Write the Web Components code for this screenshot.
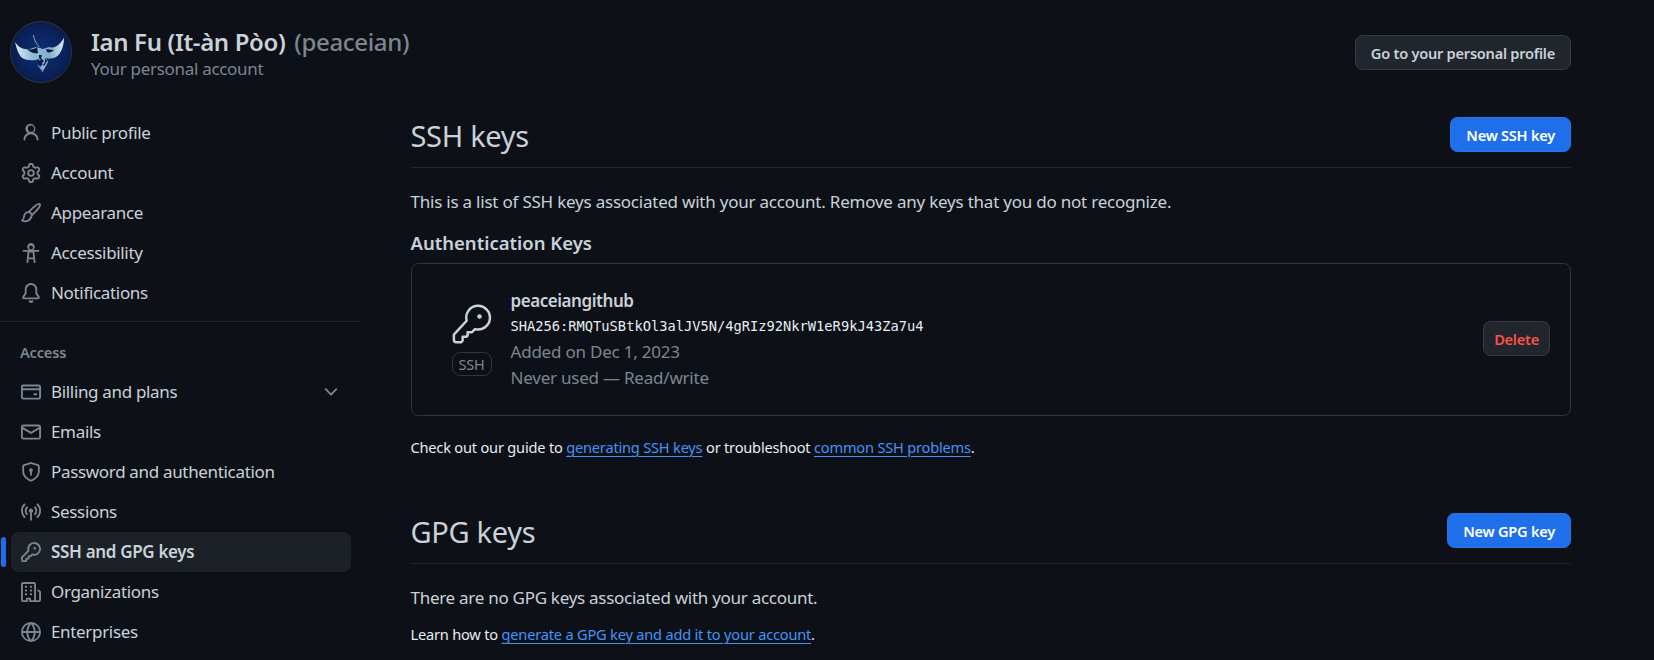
<!DOCTYPE html>
<html lang="en">
<head>
<meta charset="utf-8">
<title>SSH and GPG keys</title>
<style>
  html, body { margin: 0; height: 660px; overflow: hidden; background: #0d1117; }
  body { font-family: "Noto Sans", "Liberation Sans", sans-serif; color: #c9d1d9; font-size: 17px; letter-spacing: -0.3px; }
</style>
</head>
<body>
<settings-page></settings-page>

<script>
// octicons, 16px grid
const ICONS = {
    person: 'M10.561 8.073a6.005 6.005 0 0 1 3.432 5.142.75.75 0 1 1-1.498.07 4.5 4.5 0 0 0-8.99 0 .75.75 0 0 1-1.498-.07 6.004 6.004 0 0 1 3.431-5.142 3.999 3.999 0 1 1 4.123 0ZM10.5 4.5a2.5 2.5 0 1 0-5 0 2.5 2.5 0 0 0 5 0Z',
    gear: 'M8 0a8.2 8.2 0 0 1 .701.031C9.444.095 9.99.645 10.16 1.29l.288 1.107c.018.066.079.158.212.224.231.114.454.243.668.386.123.082.233.09.299.071l1.103-.303c.644-.176 1.392.021 1.82.63.27.385.506.792.704 1.218.315.675.111 1.422-.364 1.891l-.814.806c-.049.048-.098.147-.088.294.016.257.016.515 0 .772-.01.147.038.246.088.294l.814.806c.475.469.679 1.216.364 1.891a7.977 7.977 0 0 1-.704 1.217c-.428.61-1.176.807-1.82.63l-1.102-.302c-.067-.019-.177-.011-.3.071a5.909 5.909 0 0 1-.668.386c-.133.066-.194.158-.211.224l-.29 1.106c-.168.646-.715 1.196-1.458 1.26a8.006 8.006 0 0 1-1.402 0c-.743-.064-1.289-.614-1.458-1.26l-.289-1.106c-.018-.066-.079-.158-.212-.224a5.738 5.738 0 0 1-.668-.386c-.123-.082-.233-.09-.299-.071l-1.103.303c-.644.176-1.392-.021-1.82-.63a8.12 8.12 0 0 1-.704-1.218c-.315-.675-.111-1.422.363-1.891l.815-.806c.05-.048.098-.147.088-.294a6.214 6.214 0 0 1 0-.772c.01-.147-.038-.246-.088-.294l-.815-.806C.635 6.045.431 5.298.746 4.623a7.92 7.92 0 0 1 .704-1.217c.428-.61 1.176-.807 1.82-.63l1.102.302c.067.019.177.011.3-.071.214-.143.437-.272.668-.386.133-.066.194-.158.211-.224l.29-1.106C6.009.645 6.556.095 7.299.03 7.53.01 7.764 0 8 0Zm-.571 1.525c-.036.003-.108.036-.137.146l-.289 1.105c-.147.561-.549.967-.998 1.189-.173.086-.34.183-.5.29-.417.278-.97.423-1.529.27l-1.103-.303c-.109-.03-.175.016-.195.045-.22.312-.412.644-.573.99-.014.031-.021.11.059.19l.815.806c.411.406.562.957.53 1.456a4.709 4.709 0 0 0 0 .582c.032.499-.119 1.05-.53 1.456l-.815.806c-.081.08-.073.159-.059.19.162.346.353.677.573.989.02.03.085.076.195.046l1.102-.303c.56-.153 1.113-.008 1.53.27.161.107.328.204.501.29.447.222.85.629.997 1.189l.289 1.105c.029.109.101.143.137.146a6.6 6.6 0 0 0 1.142 0c.036-.003.108-.036.137-.146l.289-1.105c.147-.561.549-.967.998-1.189.173-.086.34-.183.5-.29.417-.278.97-.423 1.529-.27l1.103.303c.109.029.175-.016.195-.045.22-.313.411-.644.573-.99.014-.031.021-.11-.059-.19l-.815-.806c-.411-.406-.562-.957-.53-1.456a4.709 4.709 0 0 0 0-.582c-.032-.499.119-1.05.53-1.456l.815-.806c.081-.08.073-.159.059-.19a6.464 6.464 0 0 0-.573-.989c-.02-.03-.085-.076-.195-.046l-1.102.303c-.56.153-1.113.008-1.53-.27a4.44 4.44 0 0 0-.501-.29c-.447-.222-.85-.629-.997-1.189l-.289-1.105c-.029-.11-.101-.143-.137-.146a6.6 6.6 0 0 0-1.142 0ZM11 8a3 3 0 1 1-6 0 3 3 0 0 1 6 0ZM9.5 8a1.5 1.5 0 1 0-3.001.001A1.5 1.5 0 0 0 9.5 8Z',
    accessibility: 'M9.923 5.302c.063.063.122.129.178.198H14A.75.75 0 0 1 14 7h-3.3l.578 5.163.362 2.997a.75.75 0 0 1-1.49.18L9.868 13H6.132l-.282 2.34a.75.75 0 0 1-1.49-.18l.362-2.997L5.3 7H2a.75.75 0 0 1 0-1.5h3.9a2.54 2.54 0 0 1 .176-.198 3 3 0 1 1 3.847 0ZM9.2 7.5H6.8l-.5 4h3.4ZM8 5a1.5 1.5 0 1 0 .001-3.001A1.5 1.5 0 0 0 8 5Z',
    bell: 'M8 16a2 2 0 0 0 1.985-1.75c.017-.137-.097-.25-.235-.25h-3.5c-.138 0-.252.113-.235.25A2 2 0 0 0 8 16ZM3 5a5 5 0 0 1 10 0v2.947c0 .05.015.098.042.139l1.703 2.555A1.519 1.519 0 0 1 13.482 13H2.518a1.516 1.516 0 0 1-1.263-2.36l1.703-2.554A.255.255 0 0 0 3 7.947Zm5-3.5A3.5 3.5 0 0 0 4.5 5v2.947c0 .346-.102.683-.294.97l-1.703 2.556a.017.017 0 0 0-.003.01l.001.006c0 .002.002.004.004.006l.006.004.007.001h10.964l.007-.001.006-.004.004-.006.001-.007a.017.017 0 0 0-.003-.01l-1.703-2.554a1.745 1.745 0 0 1-.294-.97V5A3.5 3.5 0 0 0 8 1.5Z',
    card: 'M10.75 9a.75.75 0 0 0 0 1.5h1.5a.75.75 0 0 0 0-1.5h-1.5Z M0 3.75C0 2.784.784 2 1.75 2h12.5c.966 0 1.75.784 1.75 1.75v8.5A1.75 1.75 0 0 1 14.25 14H1.75A1.75 1.75 0 0 1 0 12.25ZM14.5 6.5h-13v5.75c0 .138.112.25.25.25h12.5a.25.25 0 0 0 .25-.25Zm0-2.75a.25.25 0 0 0-.25-.25H1.75a.25.25 0 0 0-.25.25V5h13Z',
    mail: 'M1.75 2h12.5c.966 0 1.75.784 1.75 1.75v8.5A1.75 1.75 0 0 1 14.25 14H1.75A1.75 1.75 0 0 1 0 12.25v-8.5C0 2.784.784 2 1.75 2ZM1.5 12.251c0 .138.112.25.25.25h12.5a.25.25 0 0 0 .25-.25V5.809L8.38 9.397a.75.75 0 0 1-.76 0L1.5 5.809v6.442Zm13-8.181v-.32a.25.25 0 0 0-.25-.25H1.75a.25.25 0 0 0-.25.25v.32L8 7.88Z',
    shield: 'm8.533.133 5.25 1.68A1.75 1.75 0 0 1 15 3.48V7c0 1.566-.32 3.182-1.303 4.682-.983 1.498-2.585 2.813-5.032 3.855a1.697 1.697 0 0 1-1.33 0c-2.447-1.042-4.049-2.357-5.032-3.855C1.32 10.182 1 8.566 1 7V3.48a1.75 1.75 0 0 1 1.217-1.667l5.25-1.68a1.748 1.748 0 0 1 1.066 0Zm-.61 1.429.001.001-5.25 1.68a.251.251 0 0 0-.174.237V7c0 1.36.275 2.666 1.057 3.859.784 1.194 2.121 2.342 4.366 3.298a.196.196 0 0 0 .154 0c2.245-.957 3.582-2.103 4.366-3.297C13.225 9.666 13.5 8.358 13.5 7V3.48a.25.25 0 0 0-.174-.238l-5.25-1.68a.25.25 0 0 0-.153 0ZM9.5 6.5c0 .536-.286 1.032-.75 1.3v2.45a.75.75 0 0 1-1.5 0V7.8A1.5 1.5 0 1 1 9.5 6.5Z',
    broadcast: 'M8.75 8.582v5.668a.75.75 0 0 1-1.5 0V8.582a1.75 1.75 0 1 1 1.5 0Zm3.983-7.125a.75.75 0 0 1 1.06.026A7.976 7.976 0 0 1 16 7c0 2.139-.84 4.083-2.207 5.517a.75.75 0 1 1-1.086-1.034A6.474 6.474 0 0 0 14.5 7a6.474 6.474 0 0 0-1.793-4.483.75.75 0 0 1 .026-1.06Zm-9.466 0a.75.75 0 0 1 .026 1.06A6.474 6.474 0 0 0 1.5 7a6.47 6.47 0 0 0 1.793 4.483.75.75 0 0 1-1.086 1.034A7.973 7.973 0 0 1 0 7c0-2.139.84-4.083 2.207-5.517a.75.75 0 0 1 1.06-.026Zm8.556 2.321A4.988 4.988 0 0 1 13 7a4.988 4.988 0 0 1-1.177 3.222.75.75 0 1 1-1.146-.967A3.487 3.487 0 0 0 11.5 7c0-.86-.309-1.645-.823-2.255a.75.75 0 0 1 1.146-.967Zm-6.492.958A3.48 3.48 0 0 0 4.5 7a3.48 3.48 0 0 0 .823 2.255.75.75 0 0 1-1.146.967A4.981 4.981 0 0 1 3 7a4.982 4.982 0 0 1 1.188-3.236.75.75 0 1 1 1.143.972Z',
    key: 'M10.5 0a5.499 5.499 0 1 1-1.288 10.848l-.932.932a.749.749 0 0 1-.53.22H7v.75a.749.749 0 0 1-.22.53l-.5.5a.749.749 0 0 1-.53.22H5v.75a.749.749 0 0 1-.22.53l-.5.5a.749.749 0 0 1-.53.22h-2A1.75 1.75 0 0 1 0 14.25v-2c0-.199.079-.389.22-.53l4.932-4.932A5.5 5.5 0 0 1 10.5 0Zm-4 5.5c-.001.431.069.86.205 1.269a.75.75 0 0 1-.181.768L1.5 12.56v1.69c0 .138.112.25.25.25h1.69l.06-.06v-1.19a.75.75 0 0 1 .75-.75h1.19l.06-.06v-1.19a.75.75 0 0 1 .75-.75h1.19l1.023-1.025a.75.75 0 0 1 .768-.18A4 4 0 1 0 6.5 5.5ZM11 6a1 1 0 1 1 0-2 1 1 0 0 1 0 2Z',
    organization: 'M1.75 16A1.75 1.75 0 0 1 0 14.25V1.75C0 .784.784 0 1.75 0h8.5C11.216 0 12 .784 12 1.75v12.5c0 .085-.006.168-.018.25h2.268a.25.25 0 0 0 .25-.25V8.285a.25.25 0 0 0-.111-.208l-1.055-.703a.749.749 0 1 1 .832-1.248l1.055.703c.487.325.779.871.779 1.456v5.965A1.75 1.75 0 0 1 14.25 16h-3.5a.766.766 0 0 1-.197-.026c-.099.017-.2.026-.303.026h-3a.75.75 0 0 1-.75-.75V14h-1v1.25a.75.75 0 0 1-.75.75Zm-.25-1.75c0 .138.112.25.25.25H4v-1.25a.75.75 0 0 1 .75-.75h2.5a.75.75 0 0 1 .75.75v1.25h2.25a.25.25 0 0 0 .25-.25V1.75a.25.25 0 0 0-.25-.25h-8.5a.25.25 0 0 0-.25.25ZM3.75 6h.5a.75.75 0 0 1 0 1.5h-.5a.75.75 0 0 1 0-1.5ZM3 3.75A.75.75 0 0 1 3.75 3h.5a.75.75 0 0 1 0 1.5h-.5A.75.75 0 0 1 3 3.75Zm4 3A.75.75 0 0 1 7.75 6h.5a.75.75 0 0 1 0 1.5h-.5A.75.75 0 0 1 7 6.75ZM7.75 3h.5a.75.75 0 0 1 0 1.5h-.5a.75.75 0 0 1 0-1.5ZM3 9.75A.75.75 0 0 1 3.75 9h.5a.75.75 0 0 1 0 1.5h-.5A.75.75 0 0 1 3 9.75ZM7.75 9h.5a.75.75 0 0 1 0 1.5h-.5a.75.75 0 0 1 0-1.5Z',
    globe: 'M8 0a8 8 0 1 1 0 16A8 8 0 0 1 8 0ZM5.78 8.75a9.64 9.64 0 0 0 1.363 4.177c.255.426.542.832.857 1.215.245-.296.551-.705.857-1.215A9.64 9.64 0 0 0 10.22 8.75Zm4.44-1.5a9.64 9.64 0 0 0-1.363-4.177c-.307-.51-.612-.919-.857-1.215a9.927 9.927 0 0 0-.857 1.215A9.64 9.64 0 0 0 5.78 7.25Zm-5.944 1.5H1.543a6.507 6.507 0 0 0 4.666 5.5c-.123-.181-.24-.365-.352-.552-.715-1.192-1.437-2.874-1.581-4.948Zm-2.733-1.5h2.733c.144-2.074.866-3.756 1.58-4.948.12-.197.237-.381.353-.552a6.507 6.507 0 0 0-4.666 5.5Zm10.181 1.5c-.144 2.074-.866 3.756-1.58 4.948-.12.197-.237.381-.353.552a6.507 6.507 0 0 0 4.666-5.5Zm2.733-1.5a6.507 6.507 0 0 0-4.666-5.5c.123.181.24.365.353.552.714 1.192 1.436 2.874 1.58 4.948Z',
    chevron: 'M12.78 5.22a.749.749 0 0 1 0 1.06l-4.25 4.25a.749.749 0 0 1-1.06 0L3.22 6.28a.749.749 0 1 1 1.06-1.06L8 8.939l3.72-3.719a.749.749 0 0 1 1.06 0Z'
};

function iconSvg(name, size) {
    if (name === 'paintbrush') {
        // drawn as strokes
        return `<svg width="${size}" height="${size}" viewBox="0 0 16 16" fill="none" stroke="currentColor" stroke-width="1.5" stroke-linejoin="round" stroke-linecap="round"><path d="M15 1c-1-1-4.7 1.5-8.5 5.9l2.5 2.5C13.4 5.7 16 2 15 1Z"/><path d="M6.3 7.4C4.2 7 2.7 8.6 2.5 10.6 2.3 12.4 1.9 13.4.8 14c2 1.2 6.9 1.1 7.8-4.4"/></svg>`;
    }
    return `<svg width="${size}" height="${size}" viewBox="0 0 16 16" fill="currentColor"><path fill-rule="evenodd" d="${ICONS[name]}"/></svg>`;
}

class NavItem extends HTMLElement {
    connectedCallback() {
        const name = this.getAttribute('icon');
        const active = this.hasAttribute('active');
        this.attachShadow({ mode: 'open' });
        this.shadowRoot.innerHTML = `
            <style>
                :host { display: block; position: relative; }
                a {
                    display: flex; align-items: center; gap: 10px;
                    height: 40px; margin-left: 11px; width: 340px; padding-left: 10px; box-sizing: border-box;
                    border-radius: 7.5px; color: #c9d1d9; text-decoration: none; line-height: 26px; letter-spacing: -0.33px;
                }
                svg { color: #7d8590; flex: none; }
                .label { flex: 1; }
                .more { display: flex; margin-right: 10px; }
                :host([active]) a { background: #1c2127; font-weight: 600; }
                .bar { position: absolute; left: 1px; top: 5px; width: 5px; height: 30px; border-radius: 3px; background: #1f6feb; }
            </style>
            ${active ? '<span class="bar"></span>' : ''}
            <a href="#">${iconSvg(name, 20)}<span class="label"><slot></slot></span>
            ${this.hasAttribute('more') ? `<span class="more">${iconSvg('chevron', 20)}</span>` : ''}</a>`;
    }
}
customElements.define('nav-item', NavItem);

class GhButton extends HTMLElement {
    connectedCallback() {
        this.attachShadow({ mode: 'open' });
        this.shadowRoot.innerHTML = `
            <style>
                :host { display: inline-block; flex: none; }
                button {
                    font: 600 14.6px "Noto Sans", "Liberation Sans", sans-serif; letter-spacing: -0.25px;
                    height: 35px; padding: 0 15px; border-radius: 7.5px; box-sizing: border-box; display: block;
                    background: #21262d; border: 1px solid #363b42; color: #c9d1d9;
                }
                :host([kind=primary]) button { background: #1f6feb; border-color: #2a74ea; color: #fff; }
                :host([kind=danger]) button { color: #f85149; padding: 0 10px; }
            </style>
            <button type="button"><slot></slot></button>`;
    }
}
customElements.define('gh-button', GhButton);

class AccountHead extends HTMLElement {
    connectedCallback() {
        this.attachShadow({ mode: 'open' });
        this.shadowRoot.innerHTML = `
            <style>
                :host { display: flex; align-items: flex-start; padding: 21px 83px 0 10px; height: 62px; }
                .avatar { flex: none; display: block; }
                .who { flex: 1; margin-left: 19px; }
                .name { font-size: 24px; font-weight: 600; line-height: 36px; margin-top: 3px; letter-spacing: -0.35px; color: #c9d1d9; }
                .name span { font-weight: 500; color: #7d8590; margin-left: 3px; }
                .sub { font-size: 17px; line-height: 22px; margin-top: -2px; color: #7d8590; }
                .go { margin-top: 14px; }
            </style>
            <svg class="avatar" width="62" height="62" viewBox="0 0 62 62">
                <defs>
                    <radialGradient id="sky" cx="50%" cy="50%" r="52%">
                        <stop offset="0" stop-color="#0f2f74"/><stop offset="0.8" stop-color="#0a2058"/><stop offset="1" stop-color="#081a45"/>
                    </radialGradient>
                    <linearGradient id="wing" x1="0" y1="0" x2="1" y2="0">
                        <stop offset="0" stop-color="#dcecf6"/><stop offset="0.35" stop-color="#8fbcd8"/><stop offset="0.7" stop-color="#80aecd"/><stop offset="1" stop-color="#d5e8f4"/>
                    </linearGradient>
                </defs>
                <circle cx="31" cy="31" r="30.5" fill="url(#sky)" stroke="#30363d"/>
                <path fill="url(#wing)" d="M5 20.7C8 26 13 29 20 28L26 26 33 28 39 26C44 28 50 24 54 16.7 54 25 51 33 46 36 42 38 38 38 36 37L38 41 36 45 33 50 30 46 33 43 30 41 29 38C24 40 15 40 11 36 8 32 6 26 5 20.7Z"/>
                <path fill="#0a1a3c" d="M17 28c4 1 8 0 10-2l1 6c-3 1-7 0-11-4ZM36 28l8 1c-2 2-5 3-7 2ZM29 34l3 0-1 3 3 3-3 3 1 1-3-1 0-3 2-1-2-2ZM35 37l2 3-3 5-1-1 2-3Z"/>
                <path fill="none" stroke="#a9c8de" stroke-width=".8" d="M23.3 14c1 5 3 9 6 12M28 44l5 7"/>
            </svg>
            <div class="who">
                <div class="name">Ian Fu (It-àn Pòo) <span>(peaceian)</span></div>
                <div class="sub">Your personal account</div>
            </div>
            <gh-button class="go">Go to your personal profile</gh-button>`;
    }
}
customElements.define('account-head', AccountHead);

class SectionHead extends HTMLElement {
    connectedCallback() {
        this.attachShadow({ mode: 'open' });
        this.shadowRoot.innerHTML = `
            <style>
                :host { display: flex; justify-content: space-between; align-items: flex-start; height: 54px; border-bottom: 1px solid #21262d; }
                h2 { margin: 0; font-size: 29px; font-weight: 400; line-height: 46px; letter-spacing: -0.3px; color: #c9d1d9; }
                .act { margin-top: 4px; }
            </style>
            <h2><slot></slot></h2>
            <div class="act"><slot name="action"></slot></div>`;
    }
}
customElements.define('section-head', SectionHead);

class KeyRow extends HTMLElement {
    connectedCallback() {
        this.attachShadow({ mode: 'open' });
        this.shadowRoot.innerHTML = `
            <style>
                :host {
                    display: flex; align-items: center; height: 151px; margin-top: 7px;
                    padding: 0 20px 0 40px; border: 1px solid #30363d; border-radius: 7.5px;
                }
                .icon { width: 40px; flex: none; display: flex; flex-direction: column; gap: 8px; align-items: center; color: #c9d1d9; }
                .badge {
                    width: 40px; height: 24px; box-sizing: border-box; border: 1px solid #30363d; border-radius: 8px;
                    font-size: 14.5px; line-height: 22px; text-align: center; color: #7d8590; letter-spacing: -0.2px;
                }
                .info { flex: 1; margin-left: 19px; line-height: 26px; }
                .title { font-weight: 600; color: #c9d1d9; letter-spacing: -0.45px; line-height: 25px; }
                code { display: block; font: 13.73px/26px "DejaVu Sans Mono", "Liberation Mono", monospace; letter-spacing: 0; color: #e6edf3; }
                .meta { color: #7d8590; letter-spacing: -0.22px; }
                gh-button { margin-top: -2px; }
            </style>
            <div class="icon">
                <svg width="40" height="40" viewBox="0 0 16 16" fill="none" stroke="currentColor" stroke-width="1" stroke-linejoin="round">
                    <path d="M5.85 6.7A4.75 4.75 0 1 1 9.2 10.05L8 11.25H6.25V12.6L5.75 13.1H4.25V14.6L3.8 15.25H1.75A1 1 0 0 1 .75 14.25V12.25Z"/>
                    <circle cx="11" cy="5" r=".9" fill="currentColor" stroke="none"/>
                </svg>
                <span class="badge">SSH</span>
            </div>
            <div class="info">
                <div class="title">${this.getAttribute('name')}</div>
                <code>${this.getAttribute('fingerprint')}</code>
                <div class="meta">${this.getAttribute('added')}</div>
                <div class="meta">${this.getAttribute('used')}</div>
            </div>
            <gh-button kind="danger">Delete</gh-button>`;
    }
}
customElements.define('key-row', KeyRow);

class SettingsPage extends HTMLElement {
    connectedCallback() {
        this.attachShadow({ mode: 'open' });
        this.shadowRoot.innerHTML = `
            <style>
                :host { display: block; }
                .layout { display: flex; margin-top: 30px; padding-right: 83px; }
                aside { width: 361px; flex: none; }
                .sep { height: 1px; background: #21262d; margin: 8px 0 0 1px; }
                .group { font-size: 14.6px; font-weight: 600; color: #7d8590; height: 50px; padding: 19px 0 0 20px; box-sizing: border-box; line-height: 22px; letter-spacing: -0.2px; }
                main { flex: 1; margin-left: 49.5px; }
                p { margin: 0; line-height: 26px; }
                .lead { margin-top: 21px; letter-spacing: -0.22px; }
                .lead.short { letter-spacing: -0.28px; }
                h3 { margin: 15px 0 0; font-size: 18.5px; font-weight: 600; line-height: 26px; letter-spacing: 0; }
                .note { font-size: 14.6px; line-height: 22px; color: #e6edf3; letter-spacing: -0.2px; }
                a { color: #4493f8; text-underline-offset: 3px; }
            </style>
            <account-head></account-head>
            <div class="layout">
                <aside>
                    <nav-item icon="person">Public profile</nav-item>
                    <nav-item icon="gear">Account</nav-item>
                    <nav-item icon="paintbrush">Appearance</nav-item>
                    <nav-item icon="accessibility">Accessibility</nav-item>
                    <nav-item icon="bell">Notifications</nav-item>
                    <div class="sep"></div>
                    <div class="group">Access</div>
                    <nav-item icon="card" more>Billing and plans</nav-item>
                    <nav-item icon="mail">Emails</nav-item>
                    <nav-item icon="shield">Password and authentication</nav-item>
                    <nav-item icon="broadcast">Sessions</nav-item>
                    <nav-item icon="key" active>SSH and GPG keys</nav-item>
                    <nav-item icon="organization">Organizations</nav-item>
                    <nav-item icon="globe">Enterprises</nav-item>
                </aside>
                <main>
                    <section-head>SSH keys<gh-button slot="action" kind="primary">New SSH key</gh-button></section-head>
                    <p class="lead">This is a list of SSH keys associated with your account. Remove any keys that you do not recognize.</p>
                    <h3>Authentication Keys</h3>
                    <key-row name="peaceiangithub" fingerprint="SHA256:RMQTuSBtkOl3alJV5N/4gRIz92NkrW1eR9kJ43Za7u4" added="Added on Dec 1, 2023" used="Never used — Read/write"></key-row>
                    <p class="note" style="margin-top:20px">Check out our guide to <a href="#">generating SSH keys</a> or troubleshoot <a href="#">common SSH problems</a>.</p>
                    <section-head style="margin-top:51px">GPG keys<gh-button slot="action" kind="primary">New GPG key</gh-button></section-head>
                    <p class="lead short">There are no GPG keys associated with your account.</p>
                    <p class="note" style="margin-top:12px">Learn how to <a href="#">generate a GPG key and add it to your account</a>.</p>
                </main>
            </div>`;
    }
}
customElements.define('settings-page', SettingsPage);
</script>
</body>
</html>
